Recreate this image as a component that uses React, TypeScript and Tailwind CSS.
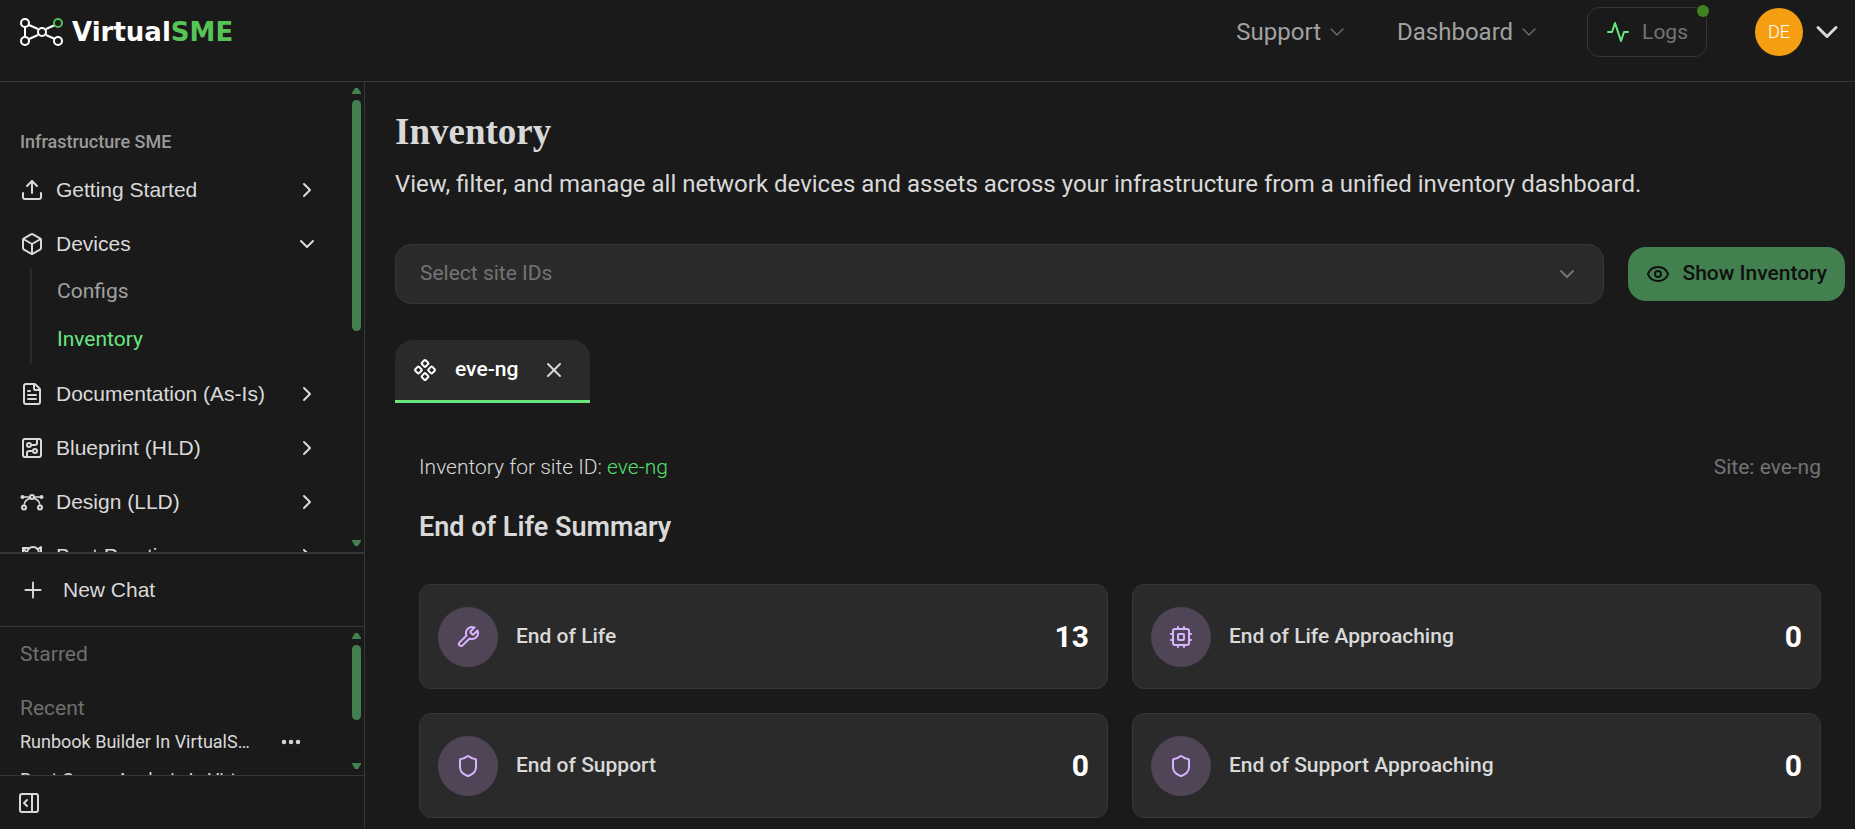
import { useState } from "react";
import type { ReactNode } from "react";
import {
  Box,
  ChevronDown,
  ChevronRight,
  CircuitBoard,
  Component,
  Ellipsis,
  Eye,
  FileText,
  PanelRightOpen,
  Plus,
  Shield,
  Upload,
  X,
} from "lucide-react";

const Logo = () => (
  <a href="#" aria-label="VirtualSME" className="flex items-center gap-2">
    <svg width="44" height="28" viewBox="0 0 44 28" fill="none" stroke="#ffffff" strokeWidth="2">
      <path d="M5 9v10M9 7l9 4M9 21l9-4M26 11l9-4M26 17l9 4" />
      <circle cx="5" cy="5" r="4" />
      <circle cx="5" cy="23" r="4" />
      <circle cx="22" cy="14" r="4" />
      <circle cx="38" cy="23" r="4" />
      <circle cx="38" cy="5" r="4" stroke="#4fbf55" />
    </svg>
    <span className="font-['DejaVu_Sans'] text-[26px] leading-7 font-bold text-white">
      Virtual<span className="text-[#56c456]">SME</span>
    </span>
  </a>
);

const StrokeIcon = ({ children, className }: { children: ReactNode; className?: string }) => (
  <svg
    width="24"
    height="24"
    viewBox="0 0 24 24"
    fill="none"
    stroke="currentColor"
    strokeWidth="2"
    strokeLinecap="round"
    strokeLinejoin="round"
    className={className}
  >
    {children}
  </svg>
);

const ActivityIcon = () => (
  <StrokeIcon className="text-[#68e680]">
    <polyline points="22 12 18 12 15 21 9 3 6 12 2 12" />
  </StrokeIcon>
);

const WrenchIcon = () => (
  <StrokeIcon>
    <path d="M14.7 6.3a1 1 0 0 0 0 1.4l1.6 1.6a1 1 0 0 0 1.4 0l3.77-3.77a6 6 0 0 1-7.94 7.94l-6.91 6.91a2.12 2.12 0 0 1-3-3l6.91-6.91a6 6 0 0 1 7.94-7.94l-3.76 3.76z" />
  </StrokeIcon>
);

const CpuIcon = () => (
  <StrokeIcon>
    <rect x="4" y="4" width="16" height="16" rx="2" />
    <rect x="9" y="9" width="6" height="6" rx="1" />
    <path d="M15 2v2M15 20v2M2 15h2M2 9h2M20 15h2M20 9h2M9 2v2M9 20v2" />
  </StrokeIcon>
);

const BezierIcon = () => (
  <StrokeIcon>
    <path d="M3 7h6M15 7h6M9.5 8.5C6.5 9.5 4.5 12 4 15M14.5 8.5c3 1 5 3.500 5.500 6.500" strokeWidth="1.5" />
    <circle cx="12" cy="7" r="2" />
    <circle cx="4" cy="17.5" r="2" />
    <circle cx="20" cy="17.5" r="2" />
    <circle cx="2.5" cy="7" r="1" />
    <circle cx="21.500" cy="7" r="1" />
  </StrokeIcon>
);

const PracticeIcon = () => (
  <StrokeIcon>
    <path d="M8 4H3v16h18V3l-3 2" />
    <path d="M3 4l4 5" />
    <circle cx="13" cy="9" r="6" />
  </StrokeIcon>
);

interface NavItem {
  label: string;
  icon: ReactNode;
  children?: string[];
}

const navItems: NavItem[] = [
  { label: "Getting Started", icon: <Upload size={24} /> },
  { label: "Devices", icon: <Box size={24} />, children: ["Configs", "Inventory"] },
  { label: "Documentation (As-Is)", icon: <FileText size={24} /> },
  { label: "Blueprint (HLD)", icon: <CircuitBoard size={24} /> },
  { label: "Design (LLD)", icon: <BezierIcon /> },
  { label: "Best Practices", icon: <PracticeIcon /> },
];

const recentChats = ["Runbook Builder In VirtualSME", "Root Cause Analysis In VirtualSME"];

const summary = [
  { label: "End of Life", value: 13, icon: <WrenchIcon /> },
  { label: "End of Life Approaching", value: 0, icon: <CpuIcon /> },
  { label: "End of Support", value: 0, icon: <Shield size={24} /> },
  { label: "End of Support Approaching", value: 0, icon: <Shield size={24} /> },
];

const ScrollRail = ({ thumb }: { thumb: string }) => (
  <div className="flex w-3 shrink-0 flex-col items-start py-1.5" aria-hidden="true">
    <svg width="9" height="6" viewBox="0 0 9 6" fill="#43804f">
      <path d="M0 6V5L3 0h3l3 5v1z" />
    </svg>
    <div className="my-1.5 w-[9px] flex-1">
      <div className={`w-full rounded-full bg-[#43804f] ${thumb}`} />
    </div>
    <svg width="9" height="6" viewBox="0 0 9 6" fill="#43804f">
      <path d="M0 0h9v1L6 6H3L0 1z" />
    </svg>
  </div>
);

const Header = () => (
  <header className="flex h-[82px] shrink-0 items-start justify-between border-b border-[#363636] pr-2.5 pl-5">
    <div className="flex h-16 items-center">
      <Logo />
    </div>
    <div className="flex h-16 items-center text-2xl text-[#a1a1a1]">
      <nav className="flex items-center gap-12">
        <button className="flex items-center gap-1">
          Support
          <ChevronDown size={24} strokeWidth={1.5} className="text-[#6b6b6b]" />
        </button>
        <button className="flex items-center gap-1">
          Dashboard
          <ChevronDown size={24} strokeWidth={1.5} className="text-[#6b6b6b]" />
        </button>
      </nav>
      <button className="relative ml-[46px] flex h-[50px] items-center gap-3 rounded-xl border border-[#363636] px-[18px] text-[21px] text-[#737373]">
        <ActivityIcon />
        Logs
        <span className="absolute -top-[3px] -right-[3px] size-3 rounded-full bg-[#3f8420]" />
      </button>
      <button className="ml-12 flex items-center gap-1.5" aria-label="Account">
        <span className="flex size-12 items-center justify-center rounded-full bg-[#f59e12] text-lg font-light text-white">
          DE
        </span>
        <ChevronDown size={36} className="text-[#d9d9d9]" />
      </button>
    </div>
  </header>
);

const Sidebar = () => {
  const [openItem, setOpenItem] = useState("Devices");
  const [page, setPage] = useState("Inventory");

  return (
    <aside className="flex w-[365px] shrink-0 flex-col border-r border-[#363636] text-[#d9d9d9]">
      <div className="flex min-h-0 flex-1">
        <nav className="min-w-0 flex-1 overflow-hidden pt-[46px] pr-[33px] pl-5">
          <h2 className="mb-[7px] text-lg leading-7 font-medium text-[#9a9a9a]">Infrastructure SME</h2>
          {navItems.map((item) => (
            <div key={item.label}>
              <button
                onClick={() => setOpenItem(openItem === item.label ? "" : item.label)}
                className="flex h-[54px] w-full items-center gap-3 text-left font-['Liberation_Sans',sans-serif] text-[21px]"
              >
                {item.icon}
                <span className="flex-1">{item.label}</span>
                {openItem === item.label ? <ChevronDown size={24} /> : <ChevronRight size={24} />}
              </button>
              {item.children && openItem === item.label && (
                <div className="-mt-[3px] mb-[3px] ml-2.5 border-l-2 border-[#2a2a2a] pl-[25px]">
                  {item.children.map((child) => (
                    <button
                      key={child}
                      onClick={() => setPage(child)}
                      className={
                        child === page
                          ? "flex h-12 w-full items-center text-[21px] text-[#68e680]"
                          : "flex h-12 w-full items-center text-[21px] text-[#a1a1a1]"
                      }
                    >
                      {child}
                    </button>
                  ))}
                </div>
              )}
            </div>
          ))}
        </nav>
        <ScrollRail thumb="h-[231px]" />
      </div>

      <div className="flex h-[75px] shrink-0 items-center border-y border-t-2 border-[#363636] px-5">
        <button className="flex items-center gap-[17px] font-['Liberation_Sans',sans-serif] text-[21px]">
          <Plus size={26} strokeWidth={1.75} />
          New Chat
        </button>
      </div>

      <div className="flex h-[148px] shrink-0">
        <div className="min-w-0 flex-1 overflow-hidden pt-3 pr-[33px] pl-5">
          <h3 className="mb-6 text-[21px] leading-[30px] text-[#6f6f6f]">Starred</h3>
          <h3 className="text-[21px] leading-[30px] text-[#6f6f6f]">Recent</h3>
          {recentChats.map((chat) => (
            <div key={chat} className="flex h-[38px] items-center justify-between pr-4">
              <a href="#" className="w-[232px] truncate text-lg">
                {chat}
              </a>
              <button aria-label="Chat options">
                <Ellipsis size={24} strokeWidth={2.5} />
              </button>
            </div>
          ))}
        </div>
        <ScrollRail thumb="h-[75px]" />
      </div>

      <div className="flex h-[54px] shrink-0 items-center border-t border-[#363636] px-[17px]">
        <button aria-label="Collapse sidebar">
          <PanelRightOpen size={24} />
        </button>
      </div>
    </aside>
  );
};

const App = () => (
  <div className="flex h-screen flex-col overflow-hidden bg-[#1a1a1a] font-[Roboto,sans-serif] text-[#d9d9d9]">
    <Header />
    <div className="flex min-h-0 flex-1">
      <Sidebar />
      <main className="min-w-0 flex-1 overflow-hidden pt-7 pr-2.5 pl-[30px]">
        <h1 className="font-['Liberation_Serif',serif] text-[37px] leading-[44px] font-bold">Inventory</h1>
        <p className="mt-3 text-2xl leading-9">
          View, filter, and manage all network devices and assets across your infrastructure from a unified inventory
          dashboard.
        </p>

        <div className="mt-[42px] flex items-center gap-6">
          <div className="relative flex-1">
            <select
              aria-label="Select site IDs"
              className="h-15 w-full appearance-none rounded-2xl border border-[#363636] bg-[#2a2a2a] px-6 text-[21px] text-[#737373]"
            >
              <option>Select site IDs</option>
            </select>
            <ChevronDown size={24} className="pointer-events-none absolute top-[18px] right-[25px] text-[#737373]" />
          </div>
          <button className="flex h-[54px] items-center gap-3 rounded-[18px] bg-[#43804f] px-[18px] text-[21px] font-medium text-[#101010]">
            <Eye size={24} />
            Show Inventory
          </button>
        </div>

        <div className="mt-9 flex">
          <div className="flex h-[63px] items-center rounded-t-[18px] border-b-[3px] border-[#68e680] bg-[#2a2a2a] px-[18px] text-white">
            <button className="flex items-center gap-[18px] text-[21px] font-medium">
              <Component size={24} />
              eve-ng
            </button>
            <button aria-label="Close tab" className="mr-1.5 ml-6 text-[#d9d9d9]">
              <X size={24} />
            </button>
          </div>
        </div>

        <section className="px-6 pt-12">
          <div className="flex items-center justify-between text-[21px] leading-8">
            <p className="font-light">
              Inventory for site ID: <span className="text-[#56e070]">eve-ng</span>
            </p>
            <p className="text-[#737373]">Site: eve-ng</p>
          </div>
          <h2 className="mt-[26px] text-[27px] leading-9 font-semibold">End of Life Summary</h2>
          <div className="mt-[39px] grid grid-cols-2 gap-6">
            {summary.map((item) => (
              <div
                key={item.label}
                className="flex h-[105px] items-center gap-[18px] rounded-xl border border-[#363636] bg-[#2a2a2a] px-[18px]"
              >
                <div className="flex size-15 items-center justify-center rounded-full bg-[#4f4557] text-[#d8b4fe]">
                  {item.icon}
                </div>
                <span className="flex-1 text-[21px] font-medium">{item.label}</span>
                <span className="text-3xl font-bold text-white">{item.value}</span>
              </div>
            ))}
          </div>
        </section>
      </main>
    </div>
  </div>
);

export default App;
